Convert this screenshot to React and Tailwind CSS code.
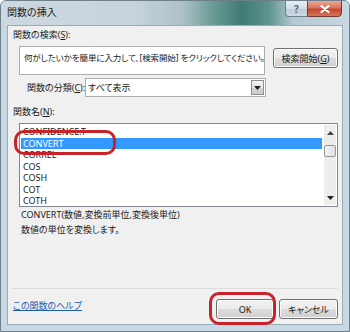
const ROWS = ["CONFIDENCE.T", "CONVERT", "CORREL", "COS", "COSH", "COT", "COTH"];

const BTN =
  "h-[20px] rounded-[3px] border border-[#707070] bg-[linear-gradient(#f2f2f2_0%,#ebebeb_50%,#dddddd_51%,#cfcfcf_100%)] shadow-[inset_0_0_0_1px_#fbfbfb] flex items-center justify-center text-[9px] leading-none text-[#1a1a1a]";

function Arrow({ down }) {
  return (
    <svg width="7" height="4" viewBox="0 0 7 4">
      {down ? <path d="M0 0h7L3.5 4z" fill="#222" /> : <path d="M0 4h7L3.5 0z" fill="#444" />}
    </svg>
  );
}

export default function App() {
  return (
    <div className="relative w-[350px] h-[332px] overflow-hidden rounded-t-[6px] border border-[#6f808c] bg-[#c8d9e6] flex flex-col font-['Noto_Sans','Noto_Sans_CJK_JP',sans-serif] [font-feature-settings:'palt'] text-[#1a1a1a]">
      {/* title bar */}
      <div className="h-[24px] shrink-0 flex items-start pl-[6px] pr-[7px] bg-[linear-gradient(90deg,#cdd8e0_0%,#c7d3db_38%,#adc2c7_52%,#6a9b95_61%,#3f7b73_69%,#5e948e_77%,#b3c9d2_84%,#c9d7e1_100%)]">
        <span className="mt-[5px] text-[10px] leading-[13px] text-[#1b1b1b]">関数の挿入</span>
        <div className="ml-auto flex -mt-[1px]">
          <div className="w-[22px] h-[17px] rounded-bl-[4px] border border-[#6e7e8a] border-r-0 bg-[linear-gradient(#e9eff3_0%,#d3dee6_50%,#bccbd6_51%,#cdd9e2_100%)] flex items-center justify-center text-[10px] leading-none text-[#5a6670] font-bold">
            ?
          </div>
          <div className="w-[35px] h-[17px] rounded-br-[4px] border border-[#6b3b34] bg-[linear-gradient(#eaa994_0%,#d8745f_45%,#c4462f_55%,#d5725c_100%)] flex items-center justify-center">
            <svg width="10" height="8" viewBox="0 0 10 8">
              <path d="M1.5 1l7 6M8.5 1l-7 6" stroke="#fff" strokeWidth="2.2" strokeLinecap="round" />
            </svg>
          </div>
        </div>
      </div>

      {/* client area */}
      <div className="flex-1 mx-[6px] mb-[6px] border border-[#9aabb8] bg-[#f0f0f0] pl-[5px] pr-[4px] flex flex-col text-[9px]">
        <div className="mt-[2px] h-[13px] leading-[13px]">
          関数の検索(<u>S</u>):
        </div>

        <div className="mt-[5px] flex items-start">
          <div className="ml-[6px] w-[246px] h-[29px] border border-[#abadb3] bg-white pl-[4px] pt-[4px] overflow-hidden whitespace-nowrap text-[8.5px] leading-[13px] tracking-[-0.1px]">
            何がしたいかを簡単に入力して、[検索開始] をクリックしてください。
          </div>
          <div className={`ml-[8px] mt-[2px] w-[65px] ${BTN}`}>
            検索開始(<u>G</u>)
          </div>
        </div>

        <div className="mt-[3px] flex items-center">
          <div className="ml-[14px] w-[58px] leading-[13px] whitespace-nowrap">
            関数の分類(<u>C</u>):
          </div>
          <div className="w-[181px] h-[19px] border border-[#abadb3] bg-white flex items-center pl-[2px]">
            <span className="leading-[13px]">すべて表示</span>
            <div className="ml-auto mr-[1px] w-[13px] h-[15px] border border-[#8f8f8f] bg-[linear-gradient(#f4f4f4_0%,#e4e4e4_50%,#d6d6d6_51%,#cccccc_100%)] flex items-center justify-center">
              <Arrow down />
            </div>
          </div>
        </div>

        <div className="mt-[8px] h-[13px] leading-[13px]">
          関数名(<u>N</u>):
        </div>

        {/* list */}
        <div className="mt-[5px] ml-[6px] w-[319px] h-[84px] border border-[#828790] bg-white p-[1px] flex gap-[2px]">
          <div className="w-[302px] pt-[1px] flex flex-col">
            {ROWS.map((r) => (
              <div
                key={r}
                className={
                  r === "CONVERT"
                    ? "h-[11.5px] leading-[11.5px] pl-[2px] bg-[#3399ff] text-white"
                    : "h-[11.5px] leading-[11.5px] pl-[2px]"
                }
              >
                {r}
              </div>
            ))}
          </div>
          <div className="w-[12px] bg-[#ededed] flex flex-col">
            <div className="h-[15px] flex items-center justify-center">
              <Arrow />
            </div>
            <div className="mt-[5px] h-[12px] rounded-[2px] border border-[#979797] bg-[linear-gradient(90deg,#f3f3f3,#e2e2e2)]" />
            <div className="flex-1" />
            <div className="h-[15px] flex items-center justify-center">
              <Arrow down />
            </div>
          </div>
        </div>

        <div className="ml-[8px] leading-[15px] whitespace-nowrap">CONVERT(数値,変換前単位,変換後単位)</div>
        <div className="ml-[8px] leading-[15px]">数値の単位を変換します。</div>

        <div className="mt-[51px] -ml-[2px] h-px bg-[#dcdcdc]" />

        <div className="mt-[10px] flex items-start">
          <span className="leading-[13px] text-[#1f5cb5] underline">この関数のヘルプ</span>
          <div className={`ml-auto w-[58px] ${BTN} border-[#3c7fb1] shadow-[inset_0_0_0_1px_#a6dcf6]`}>OK</div>
          <div className={`ml-[5px] w-[59px] ${BTN}`}>キャンセル</div>
        </div>
      </div>

      {/* red annotations */}
      <div className="absolute left-[13px] top-[129px] w-[102px] h-[25px] rounded-[10px] border-[3px] border-[#c8222b]" />
      <div className="absolute left-[208px] top-[291px] w-[67px] h-[33px] rounded-[10px] border-[3px] border-[#c8222b]" />
    </div>
  );
}
